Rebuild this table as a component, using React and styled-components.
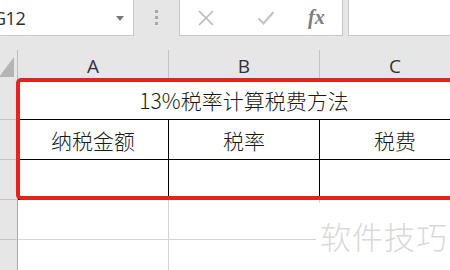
import React from "react";
import styled, { createGlobalStyle } from "styled-components";

const GlobalStyle = createGlobalStyle`
  body {
    margin: 0;
    overflow: hidden;
    background: #fff;
  }
`;

const columns = ["A", "B", "C"];
const rows = [1, 2, 3, 4, 5];

export default function App() {
  return (
    <Window>
      <GlobalStyle />
      <Workbook>
        <FormulaBar>
          <NameBox>
            <NameText>G12</NameText>
            <Caret />
          </NameBox>
          <Grip>
            <span />
            <span />
            <span />
          </Grip>
          <ActionBox>
            <ActionIcon>
              <svg width="20" height="20" viewBox="0 0 20 20">
                <path d="M3 3 L17 17 M17 3 L3 17" stroke="#b9b9b9" strokeWidth="1.6" fill="none" />
              </svg>
            </ActionIcon>
            <ActionIcon>
              <svg width="20" height="20" viewBox="0 0 20 20">
                <path d="M2.5 10.5 L7.5 15.5 L17.5 4" stroke="#c4c4c4" strokeWidth="2.2" fill="none" />
              </svg>
            </ActionIcon>
            <FxLabel>fx</FxLabel>
          </ActionBox>
          <FormulaInput />
        </FormulaBar>

        <Sheet>
          <Corner>
            <SelectAll />
          </Corner>
          {columns.map((c) => (
            <ColumnHead key={c}>{c}</ColumnHead>
          ))}

          {rows.map((r) => (
            <React.Fragment key={r}>
              <RowHead>{r}</RowHead>
              {r === 1 && (
                <Cell $span={3} $inked>
                  13%税率计算税费方法
                </Cell>
              )}
              {r === 2 && (
                <>
                  <Cell $inked>纳税金额</Cell>
                  <Cell $inked>税率</Cell>
                  <Cell $inked>税费</Cell>
                </>
              )}
              {r === 3 && (
                <>
                  <Cell $inked />
                  <Cell $inked />
                  <Cell $inked />
                </>
              )}
              {r > 3 && (
                <>
                  <Cell />
                  <Cell />
                  <Cell />
                </>
              )}
            </React.Fragment>
          ))}
        </Sheet>
      </Workbook>

      <Highlight />
      <Watermark>软件技巧</Watermark>
    </Window>
  );
}

const Window = styled.div`
  position: relative;
  width: 450px;
  height: 270px;
  overflow: hidden;
  background: #fff;
  font-family: "Noto Sans CJK SC", "Noto Sans", sans-serif;
`;

const Workbook = styled.div`
  width: 490px;
  margin-left: -20px;
`;

const FormulaBar = styled.div`
  display: flex;
  align-items: flex-start;
  height: 50px;
  background: #e6e6e6;
`;

const NameBox = styled.div`
  position: relative;
  box-sizing: border-box;
  width: 154px;
  height: 37px;
  margin-top: -1px;
  background: #fff;
  border: 1px solid #c8c8c8;
  display: flex;
  align-items: center;
  padding-left: 12px;
`;

const NameText = styled.span`
  font-family: "Open Sans", "Noto Sans", sans-serif;
  font-size: 18px;
  color: #2e2e2e;
  letter-spacing: -0.5px;
  padding-top: 1px;
`;

const Caret = styled.span`
  position: absolute;
  right: 9px;
  top: 16px;
  border-left: 4px solid transparent;
  border-right: 4px solid transparent;
  border-top: 5px solid #767676;
`;

const Grip = styled.div`
  display: flex;
  flex-direction: column;
  gap: 3px;
  width: 46px;
  align-items: center;
  padding-top: 10px;
  margin-left: -1px;

  span {
    width: 3px;
    height: 3px;
    background: #a8a8a8;
  }
`;

const ActionBox = styled.div`
  box-sizing: border-box;
  width: 164px;
  height: 37px;
  margin-top: -1px;
  background: #fff;
  border: 1px solid #c8c8c8;
  display: flex;
  align-items: center;
  padding-left: 16px;
`;

const ActionIcon = styled.span`
  display: flex;
  width: 60px;
  svg {
    display: block;
  }
`;

const FxLabel = styled.span`
  font-family: "Liberation Serif", "DejaVu Serif", serif;
  font-style: italic;
  font-weight: bold;
  font-size: 20px;
  color: #7c7c7c;
  margin-left: -8px;
`;

const FormulaInput = styled.div`
  box-sizing: border-box;
  flex: 1;
  height: 37px;
  margin-top: -1px;
  margin-left: 5px;
  background: #fff;
  border: 1px solid #c8c8c8;
`;

const Sheet = styled.div`
  display: grid;
  grid-template-columns: 38px 151px 151px 151px;
  grid-template-rows: 30px repeat(5, 40px);
`;

const Corner = styled.div`
  position: relative;
  background: #e6e6e6;
  border-right: 1px solid #bdbdbd;
`;

const SelectAll = styled.span`
  position: absolute;
  right: 3px;
  bottom: 3px;
  width: 15px;
  height: 20px;
  background: #b4b4b4;
  clip-path: polygon(100% 0, 100% 100%, 0 100%);
`;

const ColumnHead = styled.div`
  background: #e6e6e6;
  border-right: 1px solid #c4c4c4;
  display: flex;
  align-items: center;
  justify-content: center;
  font-family: "Open Sans", "Noto Sans", sans-serif;
  font-size: 19px;
  color: #333;
  padding-top: 2px;
`;

const RowHead = styled.div`
  box-sizing: border-box;
  background: #e6e6e6;
  border-right: 1px solid #a9a9a9;
  border-bottom: 1px solid #c4c4c4;
  display: flex;
  align-items: center;
  justify-content: center;
  font-family: "Open Sans", "Noto Sans", sans-serif;
  font-size: 15px;
  color: #24528a;
  padding-right: 14px;
`;

const Cell = styled.div`
  box-sizing: border-box;
  grid-column: span ${(p) => p.$span || 1};
  border-right: 1px solid ${(p) => (p.$inked && !p.$span ? "#000" : "#d4d4d4")};
  border-bottom: 1px solid ${(p) => (p.$inked ? "#000" : "#d4d4d4")};
  display: flex;
  align-items: center;
  justify-content: center;
  font-size: 21px;
  font-weight: 300;
  color: #1a1a1a;
  white-space: nowrap;
  padding-top: 1px;
`;

const Highlight = styled.div`
  position: absolute;
  left: 16px;
  top: 78px;
  width: 470px;
  height: 122px;
  box-sizing: border-box;
  border: 4px solid #e3231e;
  border-radius: 5px;
`;

const Watermark = styled.div`
  position: absolute;
  left: 316px;
  top: 203px;
  width: 134px;
  height: 67px;
  background: #fff;
  display: flex;
  align-items: flex-start;
  padding-left: 4px;
  padding-top: 10px;
  box-sizing: border-box;
  font-size: 31px;
  font-weight: 300;
  color: #d9d9d9;
  letter-spacing: 1px;
  white-space: nowrap;
`;
